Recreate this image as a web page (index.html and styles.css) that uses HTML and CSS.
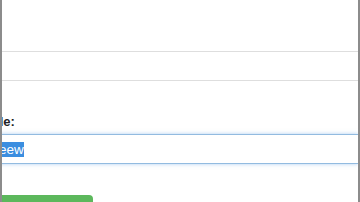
FILE: index.html
```html
<!DOCTYPE html>
<html>
<head>
<meta charset="utf-8">
<link rel="stylesheet" href="styles.css">
</head>
<body>
<div class="frame">
  <div class="top"></div>
  <div class="row"></div>
  <form class="form">
    <label class="label">Title:</label>
    <div class="input"><span class="pre">Sk</span><span class="sel">eew</span></div>
    <button class="btn" type="button">Save</button>
  </form>
</div>
</body>
</html>
```
FILE: styles.css
```css
html, body {
  margin: 0;
  padding: 0;
  background: #fff;
}
.frame {
  width: 360px;
  height: 202px;
  box-sizing: border-box;
  border-left: 2px solid #8c8c8c;
  border-right: 2px solid #8c8c8c;
  overflow: hidden;
  font-family: "Liberation Sans", Arial, sans-serif;
}
.top {
  height: 51px;
  border-bottom: 1px solid #dedede;
}
.row {
  height: 28px;
  border-bottom: 1px solid #dedede;
}
.form {
  display: flex;
  flex-direction: column;
  align-items: flex-start;
  padding-top: 33px;
}
.label {
  font-weight: bold;
  font-size: 13px;
  line-height: 16px;
  color: #222;
  margin-left: -18px;
  height: 20px;
}
.input {
  align-self: stretch;
  border-top: 1px solid #92bbe0;
  border-bottom: 1px solid #92bbe0;
  box-shadow: 0 0 4px rgba(110, 165, 230, 0.55);
  font-size: 13.5px;
  line-height: 16px;
  padding-top: 7px;
  box-sizing: border-box;
  height: 30px;
  white-space: nowrap;
  margin-left: -16px;
  color: #333;
}
.pre {
  display: inline-block;
  width: 13px;
  overflow: hidden;
  vertical-align: top;
}
.sel {
  background: #3b8ee0;
  color: #fff;
  padding: 0;
}
.btn {
  margin-top: 31px;
  margin-left: -10px;
  width: 101px;
  height: 34px;
  border: none;
  border-radius: 4px;
  background: #5cb85c;
  color: #fff;
  font-family: inherit;
  font-size: 14px;
}
```
